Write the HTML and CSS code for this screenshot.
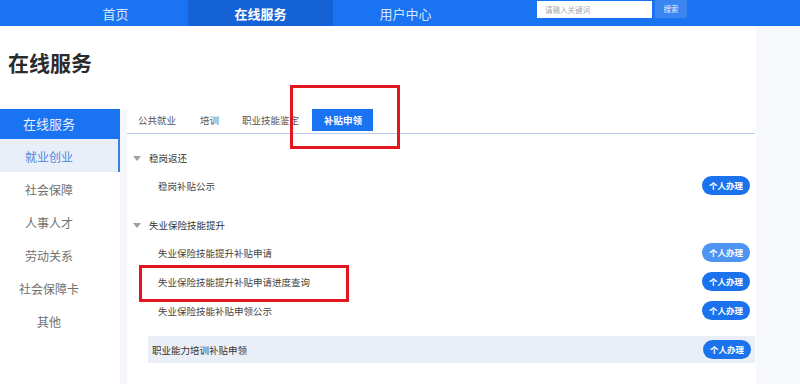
FILE: index.html
```html
<!DOCTYPE html>
<html lang="zh">
<head>
<meta charset="utf-8">
<title>在线服务</title>
<link rel="stylesheet" href="styles.css">
</head>
<body>
<header class="nav">
  <div class="nav-lead"></div>
  <a class="nav-item">首页</a>
  <a class="nav-item nav-active">在线服务</a>
  <a class="nav-item">用户中心</a>
  <div class="search">
    <div class="search-input">请输入关键词</div>
    <div class="search-btn">搜索</div>
  </div>
</header>
<div class="page">
  <main class="main">
    <h1 class="title">在线服务</h1>
    <div class="body">
      <aside class="side">
        <div class="side-head">在线服务</div>
        <div class="side-item side-active">就业创业</div>
        <div class="side-item">社会保障</div>
        <div class="side-item">人事人才</div>
        <div class="side-item">劳动关系</div>
        <div class="side-item">社会保障卡</div>
        <div class="side-item">其他</div>
      </aside>
      <div class="gutter"></div>
      <section class="panel">
        <div class="tabs">
          <div class="tab">公共就业</div>
          <div class="tab">培训</div>
          <div class="tab">职业技能鉴定</div>
          <div class="tab tab-active">补贴申领</div>
        </div>
        <div class="group">
          <div class="group-head"><span class="tri"></span>稳岗返还</div>
          <div class="row"><span>稳岗补贴公示</span><span class="btn">个人办理</span></div>
        </div>
        <div class="group group-2">
          <div class="group-head"><span class="tri"></span>失业保险技能提升</div>
          <div class="row"><span>失业保险技能提升补贴申请</span><span class="btn btn-hover">个人办理</span></div>
          <div class="row"><span>失业保险技能提升补贴申请进度查询</span><span class="btn">个人办理</span></div>
          <div class="row"><span>失业保险技能补贴申领公示</span><span class="btn">个人办理</span></div>
        </div>
        <div class="row row-gray"><span>职业能力培训补贴申领</span><span class="btn">个人办理</span></div>
      </section>
    </div>
  </main>
  <div class="rest"></div>
</div>
<div class="mark mark-tab"></div>
<div class="mark mark-row"></div>
</body>
</html>
```
FILE: styles.css
```css
* { box-sizing: border-box; }
html, body { margin: 0; padding: 0; }
body {
  width: 800px;
  height: 384px;
  overflow: hidden;
  font-family: "Noto Sans CJK SC", "Noto Sans", sans-serif;
  background: #f6f8fc;
  position: relative;
}
.nav {
  height: 26px;
  background: #1a74f2;
  display: flex;
  align-items: stretch;
}
.nav-lead { width: 43px; }
.nav-item {
  width: 145px;
  display: flex;
  align-items: center;
  justify-content: center;
  color: #d6e6ff;
  font-size: 13px;
}
.nav-active {
  background: #1462d6;
  color: #ffffff;
  font-weight: bold;
}
.search {
  margin-left: 59px;
  display: flex;
  align-items: flex-start;
  gap: 3px;
}
.search-input {
  width: 115px;
  height: 17px;
  margin-top: 1px;
  background: #ffffff;
  color: #a8a8a8;
  font-size: 7.5px;
  line-height: 17px;
  padding-left: 8px;
}
.search-btn {
  width: 32px;
  height: 18px;
  background: #3a85f2;
  color: #e8f1ff;
  font-size: 7.5px;
  line-height: 18px;
  text-align: center;
}
.page {
  display: flex;
  height: 358px;
}
.main {
  width: 756px;
  background: #ffffff;
}
.rest { flex: 1; background: #f6f8fc; }
.title {
  margin: 0;
  padding: 22px 0 0 8px;
  height: 83px;
  font-size: 21px;
  line-height: 28px;
  font-weight: bold;
  color: #2b2b2b;
}
.body {
  display: flex;
  height: 275px;
}
.side {
  width: 120px;
  background: #ffffff;
}
.side-head {
  height: 30px;
  background: #1a74f2;
  color: #e8f1ff;
  font-size: 13px;
  line-height: 30px;
  text-align: center;
  padding-right: 22px;
}
.side-item {
  height: 33px;
  padding-top: 2px;
  line-height: 31px;
  font-size: 12px;
  color: #707070;
  text-align: center;
  padding-right: 22px;
}
.side-active {
  background: #e8eff9;
  color: #4f86dc;
  border-right: 2px solid #3d7fe6;
  padding-right: 20px;
}
.gutter {
  width: 7px;
  background: #f4f6fa;
}
.panel {
  flex: 1;
  background: #ffffff;
  padding-right: 1px;
}
.tabs {
  display: flex;
  height: 25px;
  border-bottom: 1px solid #b8cbee;
  padding-left: 0;
}
.tab {
  height: 22px;
  padding: 0 11px;
  font-size: 9.5px;
  line-height: 22px;
  color: #555555;
}
.tab:nth-child(2) { padding: 0 11px 0 13px; }
.tab:nth-child(3) { padding: 0 13px 0 12px; }
.tab-active {
  background: #1a74f2;
  color: #ffffff;
  font-weight: bold;
  padding: 0 11px 0 12px;
}
.group { padding-top: 11px; }
.group-2 { padding-top: 12px; }
.group-head {
  height: 26px;
  display: flex;
  align-items: center;
  padding-left: 6px;
  font-size: 9.5px;
  color: #333333;
}
.tri {
  width: 0;
  height: 0;
  border-left: 4px solid transparent;
  border-right: 4px solid transparent;
  border-top: 5px solid #a0a0a0;
  margin-right: 8px;
}
.row {
  height: 29px;
  display: flex;
  align-items: center;
  justify-content: space-between;
  padding: 0 5px 0 31px;
  font-size: 9.5px;
  color: #444444;
}
.group .row:first-of-type { height: 30px; }
.btn {
  width: 48px;
  height: 19px;
  border-radius: 10px;
  background: #1a73ec;
  color: #ffffff;
  font-size: 8.5px;
  font-weight: bold;
  line-height: 19px;
  text-align: center;
}
.btn-hover { background: #4e94f2; }
.row-gray {
  margin: 11px 0 0 21px;
  height: 27px;
  background: #e9eef7;
  padding: 0 4px 0 4px;
  color: #333333;
}
.mark {
  position: absolute;
  border: 3px solid #e3161e;
}
.mark-tab { left: 290px; top: 85px; width: 110px; height: 64px; }
.mark-row { left: 139px; top: 265px; width: 210px; height: 37px; }
```
